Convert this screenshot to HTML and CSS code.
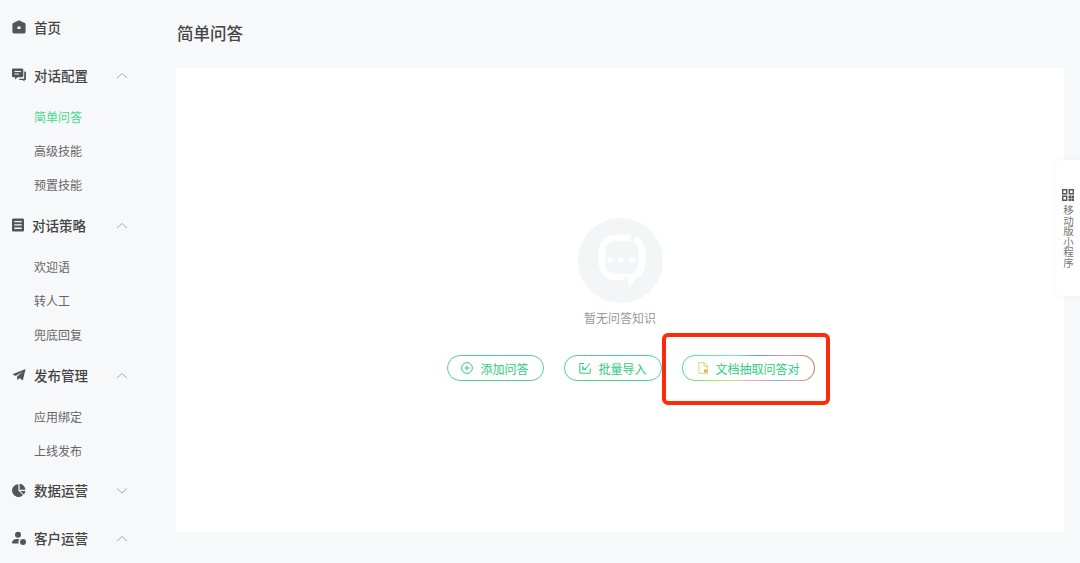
FILE: index.html
```html
<!DOCTYPE html>
<html lang="zh-CN">
<head>
  <meta charset="UTF-8" />
  <meta name="viewport" content="width=device-width, initial-scale=1.0"/>
  <title>简单问答</title>
  <link rel="stylesheet" href="styles.css">
</head>
<body>
  <div class="layout">
    <!-- Sidebar -->
    <nav class="sidebar">
      <div class="nav-group">
        <div class="nav-head">
          <svg class="nav-icon" viewBox="0 0 14 14"><path fill-rule="evenodd" d="M7 .3 12.800 3c.5.3.8.8.8 1.300v7.400c0 1-.8 1.800-1.800 1.800H2.200c-1 0-1.800-.8-1.800-1.800V4.300c0-.5.3-1 .8-1.300L7 .3ZM5.500 6.500v2.500h3V6.500h-3Z"/></svg>
          <span>首页</span>
        </div>
      </div>

      <div class="nav-group">
        <div class="nav-head">
          <svg class="nav-icon" viewBox="0 0 14 14"><path d="M1.200 .5h8.900c.7 0 1.200.5 1.200 1.200v6.400c0 .7-.5 1.200-1.200 1.200H5.600L3 11.500V9.300H1.200C.5 9.300 0 8.800 0 8.100V1.700C0 1 .5.500 1.200.5Z"/><path d="M12.200 3.500h.7c.6 0 1.100.5 1.100 1.100v6.300c0 .6-.5 1.100-1.100 1.100h-.4v1.500l-1.900-1.500H6.800l1-1.300h3.400c.6 0 1-.4 1-1V3.500Z"/><path fill="#f7f8fa" d="M2.500 3h6.300v1.100H2.500zM2.500 5.500h4.300v1.100H2.500z"/></svg>
          <span>对话配置</span>
          <svg class="chevron" viewBox="0 0 12 7"><path d="M1 6 6 1.500 11 6"/></svg>
        </div>
        <a class="nav-sub active">简单问答</a>
        <a class="nav-sub">高级技能</a>
        <a class="nav-sub">预置技能</a>
      </div>

      <div class="nav-group">
        <div class="nav-head">
          <svg class="nav-icon narrow" viewBox="0 0 12 14"><path fill-rule="evenodd" d="M1.300 .5h9.400c.7 0 1.300.6 1.300 1.300v10.400c0 .7-.6 1.300-1.300 1.300H1.300C.6 13.500 0 12.900 0 12.200V1.800C0 1.100.6.500 1.300.5Zm1 2.500v1.300h7.400V3H2.300Zm0 3.300v1.300h7.400V6.300H2.300Zm0 3.300v1.300h7.400V9.600H2.300Z"/></svg>
          <span>对话策略</span>
          <svg class="chevron" viewBox="0 0 12 7"><path d="M1 6 6 1.500 11 6"/></svg>
        </div>
        <a class="nav-sub">欢迎语</a>
        <a class="nav-sub">转人工</a>
        <a class="nav-sub">兜底回复</a>
      </div>

      <div class="nav-group">
        <div class="nav-head">
          <svg class="nav-icon" viewBox="0 0 14 14"><path d="M13.600 1 10.800 12.500 7.300 10 5.500 12.600 4.900 8.700 10.500 3.700 3.600 7.900 .4 6.200Z"/></svg>
          <span>发布管理</span>
          <svg class="chevron" viewBox="0 0 12 7"><path d="M1 6 6 1.500 11 6"/></svg>
        </div>
        <a class="nav-sub">应用绑定</a>
        <a class="nav-sub">上线发布</a>
      </div>

      <div class="nav-group nav-group-tight">
        <div class="nav-head">
          <svg class="nav-icon" viewBox="0 0 14 14"><path d="M6.400 1.200v6.400l4.600 4.500A6.400 6.400 0 1 1 6.400 1.200Z"/><path d="M7.600.8a6.200 6.200 0 0 1 5.800 5.900H7.600V.8Z"/><path d="M8.300 7.900h5.100a6.300 6.300 0 0 1-1.600 3.500L8.300 7.900Z"/></svg>
          <span>数据运营</span>
          <svg class="chevron" viewBox="0 0 12 7"><path d="M1 1.500 6 6 11 1.500"/></svg>
        </div>
      </div>

      <div class="nav-group">
        <div class="nav-head">
          <svg class="nav-icon" viewBox="0 0 14 14"><circle cx="6" cy="3.800" r="3"/><path d="M0 12c0-2.500 2-4 5-4h2.500a4 4 0 0 0-.9 4.500H.5c-.3 0-.5-.2-.5-.5Z"/><circle cx="11" cy="11" r="3"/></svg>
          <span>客户运营</span>
          <svg class="chevron" viewBox="0 0 12 7"><path d="M1 6 6 1.500 11 6"/></svg>
        </div>
      </div>
    </nav>

    <!-- Main -->
    <main class="main">
      <h1 class="page-title">简单问答</h1>
      <section class="card">
        <svg class="empty-icon" viewBox="0 0 85 85">
          <circle cx="42.500" cy="42.500" r="42.500" fill="#f4f5f7"/>
          <g fill="none" stroke="#fff" stroke-width="6.500">
            <path d="M52 20H37a13 13 0 0 0-13 13v13a13 13 0 0 0 13 13h9"/>
            <path d="M52 20a13 13 0 0 1 12 13v13a13 13 0 0 1-6 10.500"/>
          </g>
          <path fill="none" stroke="#f4f5f7" stroke-width="3.500" d="M59 13 50 29"/>
          <path fill="#fff" d="M46 55.800h15L51 70l-1.500-10.900H46Z"/>
          <circle cx="32" cy="42" r="2.600" fill="#fff"/>
          <circle cx="43" cy="42" r="2.600" fill="#fff"/>
          <circle cx="54" cy="42" r="2.600" fill="#fff"/>
        </svg>
        <p class="empty-text">暂无问答知识</p>
        <div class="actions">
          <button class="btn btn-add">
            <svg class="btn-icon" viewBox="0 0 12 12"><circle cx="6" cy="6" r="5.400"/><path d="M6 3.500v5M3.500 6h5"/></svg>
            添加问答
          </button>
          <button class="btn">
            <svg class="btn-icon" viewBox="0 0 12 12"><path d="M5 1.500H.8v9.700h10.400V6.500"/><path d="M3.800 5.200 6 7.500l4.800-6"/><path d="M3.800 3.800v3.700h3.500"/></svg>
            批量导入
          </button>
          <div class="highlight">
            <button class="btn btn-rainbow">
              <svg class="btn-icon doc-icon" viewBox="0 0 12 12"><path d="M1.800.7h5.400L10.500 4v7.300H1.800Z"/><path d="M7 .7v3.500h3.500"/><circle class="doc-dot" cx="8.500" cy="9" r="1.700"/></svg>
              文档抽取问答对
            </button>
          </div>
        </div>
      </section>
    </main>
  </div>

  <!-- Floating mini program tab -->
  <aside class="mini-tab">
    <svg class="qr-icon" viewBox="0 0 12 12"><path fill-rule="evenodd" d="M0 0h5.400v5.400H0Zm1.400 1.400v2.600h2.600V1.400ZM6.600 0H12v5.400H6.600Zm1.400 1.400v2.600h2.600V1.400ZM0 6.600h5.400V12H0Zm1.400 1.400v2.600h2.600V8ZM6.600 6.600h2.500v2.500H6.600Zm2.900 0H12v2.500H9.500ZM6.600 9.500h2.500V12H6.600Zm2.900 0H12V12H9.500Z"/></svg>
    <span class="mini-text">移动版小程序</span>
  </aside>
</body>
</html>
```

FILE: styles.css
```css
* {
  box-sizing: border-box;
}

body {
  margin: 0;
  height: 563px;
  overflow: hidden;
  position: relative;
  font-family: "Noto Sans CJK SC", "Noto Sans", sans-serif;
  background-color: #f7f8fa;
  color: #4a4a4a;
}

.layout {
  display: flex;
  height: 100%;
}

/* Sidebar */
.sidebar {
  width: 176px;
  flex-shrink: 0;
  padding: 5px 48px 0 12px;
}

.nav-group {
  margin-bottom: 1px;
}

.nav-group-tight {
  margin-top: -1px;
}

.nav-head {
  display: flex;
  align-items: center;
  gap: 8px;
  height: 47px;
  padding-bottom: 3px;
  font-size: 13.5px;
  font-weight: 500;
  color: #444;
}

.nav-icon {
  width: 14px;
  height: 14px;
  fill: #555;
  flex-shrink: 0;
}

.nav-icon.narrow {
  width: 12px;
}

.chevron {
  width: 12px;
  height: 7px;
  margin-left: auto;
  fill: none;
  stroke: #aaa;
  stroke-width: 1;
}

.nav-sub {
  display: block;
  height: 34px;
  line-height: 34px;
  padding-left: 22px;
  font-size: 12px;
  color: #666;
}

.nav-sub.active {
  color: #3ddc84;
}

/* Main */
.main {
  flex: 1;
  padding: 0 16px 31px 0;
  display: flex;
  flex-direction: column;
}

.page-title {
  margin: 0;
  height: 68px;
  line-height: 66px;
  padding-left: 1px;
  font-size: 16.5px;
  font-weight: 500;
  color: #444;
}

.card {
  flex: 1;
  background-color: #fff;
  display: flex;
  flex-direction: column;
  align-items: center;
  padding-top: 150px;
}

.empty-icon {
  width: 85px;
  height: 85px;
}

.empty-text {
  margin: 6px 0 0;
  height: 18px;
  line-height: 18px;
  font-size: 12px;
  color: #999;
}

.actions {
  display: flex;
  gap: 20px;
  margin: 28px 0 0 22px;
}

.btn {
  display: flex;
  align-items: center;
  gap: 7px;
  height: 26px;
  padding: 0 14px;
  border: 1px solid #4fd195;
  border-radius: 13px;
  background-color: #fff;
  font-family: inherit;
  font-size: 12px;
  color: #2ecb7e;
}

.btn-add {
  padding: 0 15px 0 13px;
}

.btn-icon {
  width: 12px;
  height: 12px;
  fill: none;
  stroke: #2ecb7e;
  stroke-width: 1;
}

/* Rainbow border on the new feature button */
.btn-rainbow {
  border-color: transparent;
  background:
    linear-gradient(#fff, #fff) padding-box,
    linear-gradient(90deg, #55e39a 0%, #6ff0a8 40%, #6f8cf0 58%, #e79ab0 80%, #b0805f 100%) top / 100% 50% no-repeat border-box,
    linear-gradient(90deg, #55e39a 0%, #c8e860 35%, #f0a0d0 55%, #80b0f0 70%, #e79ab0 88%, #b0805f 100%) bottom / 100% 50% no-repeat border-box;
}

.doc-icon {
  stroke: #cfe06a;
}

.doc-dot {
  fill: #f2a15f;
  stroke: none;
}

.highlight {
  position: relative;
}

/* Red annotation box over the screenshot */
.highlight::after {
  content: '';
  position: absolute;
  top: -22px;
  left: -20px;
  box-sizing: border-box;
  width: 168px;
  height: 72px;
  border: 4px solid #ff2a0a;
  border-radius: 6px;
  pointer-events: none;
}

/* Floating tab */
.mini-tab {
  position: absolute;
  top: 160px;
  right: 0;
  width: 25px;
  height: 136px;
  background-color: #fff;
  border-radius: 8px 0 0 8px;
  box-shadow: 0 0 6px rgba(0, 0, 0, 0.05);
  display: flex;
  flex-direction: column;
  align-items: center;
  padding-top: 29px;
  padding-left: 1px;
}

.qr-icon {
  width: 12px;
  height: 12px;
  fill: #555;
}

.mini-text {
  margin-top: 4px;
  writing-mode: vertical-rl;
  font-size: 10.5px;
  line-height: 12px;
  color: #777;
}
```
